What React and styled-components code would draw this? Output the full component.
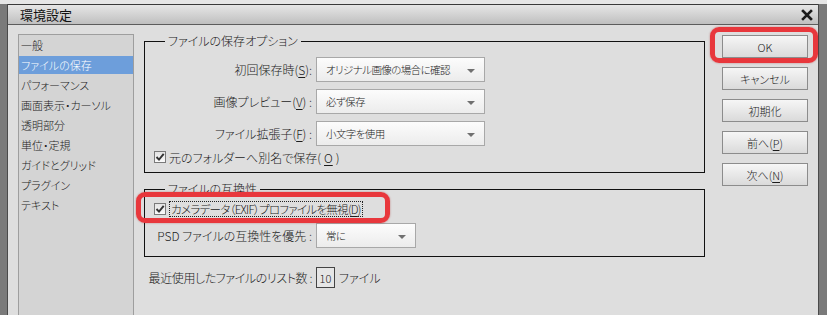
import React from 'react'
import styled, { createGlobalStyle } from 'styled-components'

const GlobalStyle = createGlobalStyle`
  html, body { margin: 0; padding: 0; }
  body {
    background: #7a7a7a;
    font-family: "Noto Sans CJK JP", "Noto Sans", sans-serif;
    font-feature-settings: "palt" 1;
    font-weight: 300;
    color: #1c1c1c;
  }
`

const Screen = styled.div`
  width: 827px;
  height: 315px;
  display: flex;
  flex-direction: column;
  overflow: hidden;
`

const TopStrip = styled.div`
  flex: none;
  height: 4px;
  background: #e6e6e6;
`

const Desk = styled.div`
  flex: 1;
  display: flex;
  background: #7a7a7a;
  min-height: 0;
`

const Dialog = styled.div`
  margin-left: 7px;
  width: 812px;
  box-sizing: border-box;
  display: flex;
  flex-direction: column;
  border-left: 1px solid #4a4a4a;
  border-right: 1px solid #4a4a4a;
`

const TitleBar = styled.div`
  flex: none;
  height: 21px;
  box-sizing: border-box;
  display: flex;
  align-items: center;
  justify-content: space-between;
  padding: 0 5px 0 12px;
  background: linear-gradient(#e6e6e6, #bfbfbf);
  border-top: 1px solid #3a3a3a;
  border-bottom: 1px solid #5c5c5c;
`

const Title = styled.span`
  font-size: 13px;
  font-weight: 400;
  color: #111;
`

const Body = styled.div`
  position: relative;
  flex: 1;
  display: flex;
  align-items: stretch;
  padding: 9px 10px 0 10px;
  background: #dedede;
  min-height: 0;
`

const Sidebar = styled.ul`
  flex: none;
  width: 116px;
  box-sizing: border-box;
  margin: 0;
  padding: 1px 0 0 0;
  list-style: none;
  background: #d4d4d4;
  border: 1px solid #9e9e9e;
  border-bottom: none;
`

const NavItem = styled.li`
  height: 18px;
  line-height: 18px;
  margin-bottom: 2px;
  padding-left: 2px;
  font-size: 11px;
  color: ${p => (p.$active ? '#fff' : '#1c1c1c')};
  background: ${p => (p.$active ? '#6d9edb' : 'transparent')};
`

const Main = styled.div`
  flex: none;
  width: 561px;
  margin-left: 10px;
  display: flex;
  flex-direction: column;
`

const Group = styled.fieldset`
  margin: ${p => p.$top || 0}px 0 0 0;
  padding: ${p => p.$pt}px 9px ${p => p.$pb}px 9px;
  min-width: 0;
  border: 1px solid #111;
  display: flex;
  flex-direction: column;
  gap: ${p => p.$gap}px;
`

const Legend = styled.legend`
  margin-left: 11px;
  padding: 0 3px;
  font-size: 12px;
  line-height: 14px;
  color: #1c1c1c;
`

const FieldRow = styled.div`
  display: flex;
  align-items: center;
  gap: 4px;
  padding-left: ${p => p.$pl || 0}px;
  margin-top: ${p => p.$mt || 0}px;
`

const Label = styled.span`
  width: 158px;
  flex: none;
  display: flex;
  justify-content: flex-end;
  font-size: 12px;
  white-space: nowrap;
  letter-spacing: ${p => p.$ls || 0}px;
`

const Key = styled.span`
  text-decoration: underline;
  text-underline-offset: 2px;
`

const Combo = styled.div`
  width: ${p => p.$w}px;
  height: 25px;
  box-sizing: border-box;
  display: flex;
  align-items: center;
  justify-content: space-between;
  padding: 0 9px;
  border: 1px solid #a8a8a8;
  background: linear-gradient(#fcfcfc, #ececec);
  font-size: 10.5px;
  letter-spacing: -0.6px;
  white-space: nowrap;
`

const Arrow = styled.span`
  flex: none;
  width: 0;
  height: 0;
  border-left: 4px solid transparent;
  border-right: 4px solid transparent;
  border-top: 4px solid #707070;
  margin-top: 2px;
`

const CheckRow = styled.label`
  display: flex;
  align-items: center;
  gap: 3px;
  height: 16px;
  font-size: 12px;
  white-space: nowrap;
  margin-top: ${p => p.$mt || 0}px;
`

const Box = styled.span`
  width: 12px;
  height: 12px;
  flex: none;
  box-sizing: border-box;
  border: 1px solid #7a7a7a;
  background: linear-gradient(#e4e4e4, #fafafa);
  display: flex;
  align-items: center;
  justify-content: center;
`

const Focus = styled.span`
  border: 1px dotted #222;
  padding: 0 1px;
  line-height: 14px;
  font-size: 11.5px;
  letter-spacing: -0.7px;
`

const NumBox = styled.div`
  width: 19px;
  height: 21px;
  box-sizing: border-box;
  border: 1px solid #444;
  background: #e6e6e6;
  font-size: 11px;
  display: flex;
  align-items: center;
  justify-content: center;
`

const Unit = styled.span`
  font-size: 12px;
`

const Buttons = styled.div`
  flex: none;
  width: 86px;
  margin-left: 17px;
  padding-top: 1px;
  display: flex;
  flex-direction: column;
  gap: 9px;
`

const Button = styled.button`
  height: 23px;
  margin: 0;
  padding: 0;
  border: 1px solid #8c8c8c;
  background: linear-gradient(#f6f6f6, #dadada);
  font-family: inherit;
  font-feature-settings: "palt" 1;
  font-weight: 300;
  font-size: 11px;
  color: #1c1c1c;
`

const Highlight = styled.div`
  position: absolute;
  left: ${p => p.$x}px;
  top: ${p => p.$y}px;
  width: ${p => p.$w}px;
  height: ${p => p.$h}px;
  box-sizing: border-box;
  border: 5px solid #e8373c;
  border-radius: 9px;
  box-shadow: 0 0 2px rgba(160, 0, 0, 0.45);
  pointer-events: none;
`

const Check = () => (
  <Box>
    <svg width="10" height="10" viewBox="0 0 10 10">
      <path d="M1.5 5 L4 7.6 L8.7 1.8" fill="none" stroke="#333" strokeWidth="1.9" />
    </svg>
  </Box>
)

const CloseIcon = () => (
  <svg width="12" height="12" viewBox="0 0 12 12">
    <path d="M2 2 L10 10 M10 2 L2 10" stroke="#1a1a1a" strokeWidth="2.6" strokeLinecap="square" />
  </svg>
)

const navItems = [
  '一般',
  'ファイルの保存',
  'パフォーマンス',
  '画面表示・カーソル',
  '透明部分',
  '単位・定規',
  'ガイドとグリッド',
  'プラグイン',
  'テキスト',
]

const App = () => {
  return (
    <>
      <GlobalStyle />
      <Screen>
        <TopStrip />
        <Desk>
          <Dialog>
            <TitleBar>
              <Title>環境設定</Title>
              <CloseIcon />
            </TitleBar>
            <Body>
              <Sidebar>
                {navItems.map((item, i) => (
                  <NavItem key={item} $active={i === 1}>{item}</NavItem>
                ))}
              </Sidebar>

              <Main>
                <Group $pt={9} $pb={7} $gap={7}>
                  <Legend>ファイルの保存オプション</Legend>
                  <FieldRow>
                    <Label>初回保存時(<Key>S</Key>):</Label>
                    <Combo $w={169}>オリジナル画像の場合に確認<Arrow /></Combo>
                  </FieldRow>
                  <FieldRow>
                    <Label>画像プレビュー(<Key>V</Key>) :</Label>
                    <Combo $w={169}>必ず保存<Arrow /></Combo>
                  </FieldRow>
                  <FieldRow>
                    <Label>ファイル拡張子(<Key>F</Key>) :</Label>
                    <Combo $w={169}>小文字を使用<Arrow /></Combo>
                  </FieldRow>
                  <CheckRow $mt={-4}>
                    <Check />
                    元のフォルダーへ別名で保存(<Key>O</Key>)
                  </CheckRow>
                </Group>

                <Group $top={9} $pt={5} $pb={8} $gap={6}>
                  <Legend>ファイルの互換性</Legend>
                  <CheckRow>
                    <Check />
                    <Focus>カメラデータ（EXIF）プロファイルを無視(<Key>D</Key>)</Focus>
                  </CheckRow>
                  <FieldRow>
                    <Label>PSD ファイルの互換性を優先 :</Label>
                    <Combo $w={100}>常に<Arrow /></Combo>
                  </FieldRow>
                </Group>

                <FieldRow $pl={10} $mt={10}>
                  <Label $ls={-0.4}>最近使用したファイルのリスト数 :</Label>
                  <NumBox>10</NumBox>
                  <Unit>ファイル</Unit>
                </FieldRow>
              </Main>

              <Buttons>
                <Button>OK</Button>
                <Button>キャンセル</Button>
                <Button>初期化</Button>
                <Button>前へ(<Key>P</Key>)</Button>
                <Button>次へ(<Key>N</Key>)</Button>
              </Buttons>

              <Highlight $x={702} $y={2} $w={108} $h={36} />
              <Highlight $x={128} $y={167} $w={254} $h={31} />
            </Body>
          </Dialog>
        </Desk>
      </Screen>
    </>
  )
}

export default App
